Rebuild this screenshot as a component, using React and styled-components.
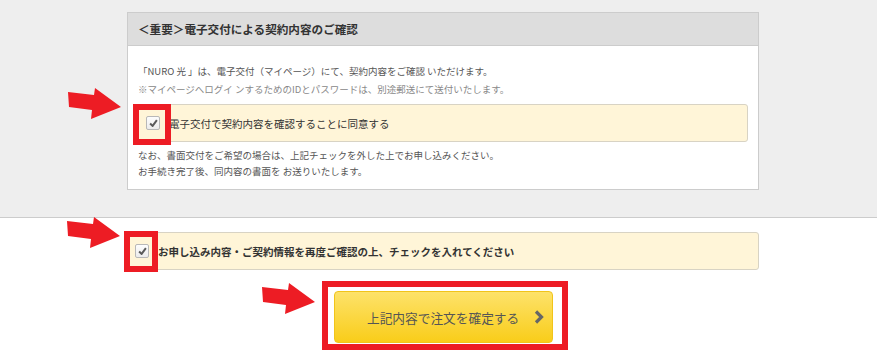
import React from "react";
import styled, { createGlobalStyle } from "styled-components";

const GlobalStyle = createGlobalStyle`
  body {
    margin: 0;
    background: #fff;
    font-family: "Noto Sans CJK JP", "Noto Sans", sans-serif;
    color: #333;
  }
`;

const RED = "#ed1c24";

const Page = styled.div`
  position: relative;
  width: 877px;
  height: 361px;
  overflow: hidden;
`;

const Upper = styled.div`
  background: #eeeeee;
  border-bottom: 1px solid #cccccc;
  padding: 12px 0 27px 127px;
`;

const Card = styled.div`
  width: 632px;
  box-sizing: border-box;
  background: #fff;
  border: 1px solid #cccccc;
`;

const CardHeader = styled.div`
  height: 32px;
  line-height: 32px;
  padding: 0 10px;
  background: #dddddd;
  border-bottom: 1px solid #cccccc;
  font-size: 11.6px;
  font-weight: bold;
  color: #333;
`;

const CardBody = styled.div`
  padding: 16px 10px 10px;
`;

const Lead = styled.p`
  margin: 0;
  font-size: 9.5px;
  line-height: 18px;
  color: ${(p) => (p.$muted ? "#888" : "#555")};
  white-space: nowrap;
`;

const Note = styled.p`
  margin: 0;
  font-size: 9.5px;
  line-height: 16px;
  color: #555;
  white-space: nowrap;
`;

const AgreeBox = styled.label`
  position: relative;
  display: flex;
  align-items: center;
  gap: 9px;
  height: 38px;
  box-sizing: border-box;
  padding-left: 7px;
  margin: ${(p) => p.$margin || "0"};
  background: #fff5d8;
  border: 1px solid #d8d3c4;
  border-radius: 3px;
  font-size: 10.5px;
  font-weight: ${(p) => (p.$strong ? "bold" : "normal")};
  color: #333;
  white-space: nowrap;
`;

const Box = styled.span`
  display: flex;
  align-items: center;
  justify-content: center;
  width: 14px;
  height: 14px;
  box-sizing: border-box;
  border: 1px solid #b8b8b8;
  border-radius: 2px;
  background: linear-gradient(#fdfdfd, #ececec);
  flex-shrink: 0;
`;

const Mark = styled.span`
  position: absolute;
  left: ${(p) => p.$left}px;
  top: ${(p) => p.$top}px;
  width: ${(p) => p.$w}px;
  height: ${(p) => p.$h}px;
  box-sizing: border-box;
  border: 6px solid ${RED};
  pointer-events: none;
`;

const Lower = styled.div`
  width: 632px;
  margin-left: 127px;
  padding-top: 14px;
`;

const ButtonRow = styled.div`
  display: flex;
  justify-content: center;
  margin-top: 11px;
  padding-left: 4px;
`;

const Highlight = styled.div`
  border: 6px solid ${RED};
  padding: 4px 9px 1px 6px;
  background: #fff;
`;

const SubmitButton = styled.button`
  display: flex;
  align-items: center;
  width: 219px;
  height: 52px;
  box-sizing: border-box;
  padding: 0 0 0 32px;
  border: 1px solid #f1c41a;
  border-radius: 4px;
  background: linear-gradient(#fde26a, #f9cd1a);
  font-family: "Noto Sans CJK JP", "Noto Sans", sans-serif;
  font-size: 12.7px;
  color: #555;
  cursor: pointer;
  svg {
    margin-left: 15px;
  }
`;

const ArrowWrap = styled.svg`
  position: absolute;
  left: ${(p) => p.$x}px;
  top: ${(p) => p.$y}px;
`;

function Check() {
  return (
    <Box>
      <svg width="9" height="8" viewBox="0 0 10 9">
        <path d="M1.2 5 L4 7.8 L8.8 1.2" fill="none" stroke="#5a5a5a" strokeWidth="2.2" />
      </svg>
    </Box>
  );
}

function Arrow({ x, y }) {
  return (
    <ArrowWrap $x={x} $y={y} width="56" height="33" viewBox="0 0 56 33">
      <polygon points="1,5 27,8 28,1 54,20 24,32 25,23 2,20" fill={RED} />
    </ArrowWrap>
  );
}

export default function App() {
  return (
    <>
      <GlobalStyle />
      <Page>
        <Upper>
          <Card>
            <CardHeader>＜重要＞電子交付による契約内容のご確認</CardHeader>
            <CardBody>
              <Lead>「NURO 光 」は、電子交付（マイページ）にて、契約内容をご確認 いただけます。</Lead>
              <Lead $muted>※マイページへログイ ンするためのIDとパスワードは、別途郵送にて送付いたします。</Lead>
              <AgreeBox $margin="6px 0 5px">
                <Check />
                電子交付で契約内容を確認することに同意する
                <Mark $left={-6} $top={-1} $w={38} $h={41} />
              </AgreeBox>
              <Note>なお、書面交付をご希望の場合は、上記チェックを外した上でお申し込みください。</Note>
              <Note>お手続き完了後、同内容の書面を お送りいたします。</Note>
            </CardBody>
          </Card>
        </Upper>
        <Lower>
          <AgreeBox $strong>
            <Check />
            お申し込み内容・ご契約情報を再度ご確認の上、チェックを入れてください
            <Mark $left={-4} $top={-2} $w={34} $h={41} />
          </AgreeBox>
          <ButtonRow>
            <Highlight>
              <SubmitButton type="button">
                上記内容で注文を確定する
                <svg width="10" height="14" viewBox="0 0 10 14">
                  <path d="M2 1.5 L7.5 7 L2 12.5" fill="none" stroke="#666" strokeWidth="3.2" />
                </svg>
              </SubmitButton>
            </Highlight>
          </ButtonRow>
        </Lower>
        <Arrow x={67} y={87} />
        <Arrow x={66} y={216} />
        <Arrow x={261} y={282} />
      </Page>
    </>
  );
}
